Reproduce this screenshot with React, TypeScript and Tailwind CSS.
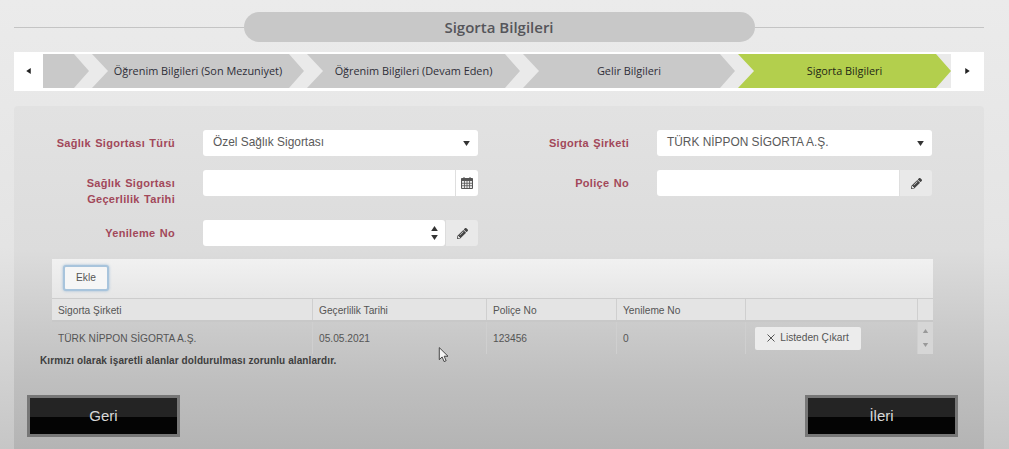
import React from "react";
import { FaPencilAlt } from "react-icons/fa";

const Tri = ({ dir, className }: { dir: "up" | "down" | "left" | "right"; className?: string }) => {
  const points = {
    up: "0,6 4,0 8,6",
    down: "0,0 8,0 4,6",
    left: "6,0 6,8 0,4",
    right: "0,0 0,8 6,4",
  }[dir];
  const box = dir === "up" || dir === "down" ? "0 0 8 6" : "0 0 6 8";
  return (
    <svg viewBox={box} className={className} fill="currentColor">
      <polygon points={points} />
    </svg>
  );
};

const CalendarIcon = () => (
  <svg viewBox="0 0 12 12" className="w-[12px] h-[12px] text-[#555]">
    <path d="M0.5 1.5h11v10h-11z" fill="#e8e8e8" stroke="currentColor" />
    <path d="M0.5 1.5h11v2.5h-11z" fill="currentColor" />
    <path d="M3.5 4v7M6 4v7M8.5 4v7M1 6.3h10M1 8.7h10" stroke="currentColor" strokeWidth="0.8" />
    <path d="M3 0v2M9 0v2" stroke="currentColor" />
  </svg>
);

const Chevron = ({ label, active, width }: { label?: string; active?: boolean; width: string }) => (
  <div
    className={`${width} h-[34px] flex items-center justify-center text-[10.9px] font-normal [font-family:'Open_Sans',sans-serif] [clip-path:polygon(0_0,calc(100%-15px)_0,100%_50%,calc(100%-15px)_100%,0_100%,16px_50%)] ${
      active ? "bg-[#b3cf4d] text-[#1f2815]" : "bg-[#c9c9c9] text-[#2e2e38]"
    }`}
  >
    {label}
  </div>
);

const Label = ({ children, className }: { children: React.ReactNode; className?: string }) => (
  <div
    className={`whitespace-nowrap text-right text-[11px] leading-[16px] font-bold tracking-[0.3px] [word-spacing:1px] text-[#a2485a] ${className ?? ""}`}
  >
    {children}
  </div>
);

const Select = ({ value }: { value: string }) => (
  <div className="w-[275px] h-[26px] bg-white rounded-[3px] flex items-center justify-between pl-[10px] pr-[8px] text-[11.9px] text-[#5a5a5a]">
    <span>{value}</span>
    <Tri dir="down" className="w-[7px] h-[5px] text-[#333]" />
  </div>
);

const PencilBtn = ({ width }: { width: string }) => (
  <div className={`${width} h-full bg-[#e9e9e9] rounded-r-[3px] flex items-center justify-center`}>
    <FaPencilAlt className="w-[11px] h-[11px] text-[#444]" />
  </div>
);

const Cell = ({ width, children, className }: { width: string; children?: React.ReactNode; className?: string }) => (
  <div className={`${width} shrink-0 h-full flex items-center pl-[6px] border-r border-[#cfcfcf] ${className ?? ""}`}>
    {children}
  </div>
);

const BlackBtn = ({ label }: { label: string }) => (
  <div className="w-[153px] h-[42px] border-[3px] border-[#777] flex flex-col relative">
    <div className="h-[19px] bg-[#242424]" />
    <div className="flex-1 bg-[#040404]" />
    <span className="absolute inset-0 flex items-center justify-center text-[15px] text-[#d8d8d8]">{label}</span>
  </div>
);

export default function App() {
  return (
    <div className="w-[1009px] h-[449px] overflow-hidden relative flex flex-col pl-[14px] pr-[25px] pt-[12px] bg-[linear-gradient(#ebebeb_0%,#e4e4e4_55%,#c6c6c6_100%)] [font-family:'Liberation_Sans',sans-serif]">
      {/* title */}
      <div className="h-[30px] shrink-0 flex items-center">
        <div className="flex-1 h-px bg-[#c4c4c4]" />
        <div className="w-[511px] h-[30px] rounded-[15px] bg-[#c8c8c8] flex items-center justify-center text-[15px] font-semibold text-[#55555a] [font-family:'Open_Sans',sans-serif]">
          Sigorta Bilgileri
        </div>
        <div className="flex-1 h-px bg-[#c4c4c4]" />
      </div>

      {/* wizard steps */}
      <div className="mt-[10px] h-[39px] shrink-0 flex bg-[#eaeaea] border-b-[3px] border-t-[2px] border-white">
        <div className="w-[29px] bg-white flex items-center justify-center">
          <Tri dir="left" className="w-[5px] h-[6px] text-[#222]" />
        </div>
        <div className="flex gap-[3px]">
          <div className="w-[46px] h-[34px] bg-[#c9c9c9] [clip-path:polygon(0_0,calc(100%-15px)_0,100%_50%,calc(100%-15px)_100%,0_100%)]" />
          <Chevron label="Öğrenim Bilgileri (Son Mezuniyet)" width="w-[212px]" />
          <Chevron label="Öğrenim Bilgileri (Devam Eden)" width="w-[213px]" />
          <Chevron label="Gelir Bilgileri" width="w-[212px]" />
          <Chevron label="Sigorta Bilgileri" active width="w-[213px]" />
        </div>
        <div className="flex-1 bg-white flex items-center justify-center">
          <Tri dir="right" className="w-[5px] h-[6px] text-[#222]" />
        </div>
      </div>

      {/* main panel */}
      <div className="mt-[15px] flex-1 relative rounded-t-[4px] bg-[linear-gradient(#e2e2e2_0%,#dcdcdc_42%,#c8c8c8_68%,#bfbfbf_80%,#b4b4b4_100%)] pt-[24px] pl-[38px] pr-[51px] flex flex-col">
        <div className="flex">
          {/* left form column */}
          <div className="w-[426px] flex flex-col">
            <div className="h-[26px] flex items-center">
              <Label className="w-[123px]">Sağlık Sigortası Türü</Label>
              <div className="ml-[28px]">
                <Select value="Özel Sağlık Sigortası" />
              </div>
            </div>
            <div className="mt-[14px] h-[26px] flex">
              <Label className="w-[123px] mt-[5px] h-[32px]">
                Sağlık Sigortası
                <br />
                Geçerlilik Tarihi
              </Label>
              <div className="ml-[28px] w-[275px] h-[26px] flex gap-[1px]">
                <div className="flex-1 bg-white rounded-l-[3px]" />
                <div className="w-[22px] bg-white rounded-r-[3px] flex items-center justify-center">
                  <CalendarIcon />
                </div>
              </div>
            </div>
            <div className="mt-[24px] h-[26px] flex items-center">
              <Label className="w-[123px] -mt-[1px]">Yenileme No</Label>
              <div className="ml-[28px] w-[275px] h-[26px] flex gap-[1px]">
                <div className="flex-1 bg-white rounded-l-[3px] rounded-r-[3px] flex items-center justify-end pr-[7px]">
                  <div className="flex flex-col gap-[4px]">
                    <Tri dir="up" className="w-[7px] h-[5px] text-[#333]" />
                    <Tri dir="down" className="w-[7px] h-[5px] text-[#333]" />
                  </div>
                </div>
                <PencilBtn width="w-[32px]" />
              </div>
            </div>
          </div>

          {/* right form column */}
          <div className="ml-[28px] flex flex-col">
            <div className="h-[26px] flex items-center">
              <Label className="w-[123px]">Sigorta Şirketi</Label>
              <div className="ml-[28px]">
                <Select value="TÜRK NİPPON SİGORTA A.Ş." />
              </div>
            </div>
            <div className="mt-[14px] h-[26px] flex items-center">
              <Label className="w-[123px]">Poliçe No</Label>
              <div className="ml-[28px] w-[275px] h-[26px] flex gap-[1px]">
                <div className="flex-1 bg-white rounded-l-[3px]" />
                <PencilBtn width="w-[32px]" />
              </div>
            </div>
          </div>
        </div>

        {/* table */}
        <div className="mt-[13px] w-[881px] text-[10.2px] text-[#555]">
          <div className="h-[40px] flex items-center pl-[11px] pb-[2px] bg-[linear-gradient(#f1f1f1,#e6e6e6)] border-b border-[#cdcdcd]">
            <div className="w-[46px] h-[26px] rounded-[3px] border-2 border-[#a8c4dc] bg-[#f6f6f6] flex items-center justify-center shadow-[0_0_3px_#9dbbd6]">
              Ekle
            </div>
          </div>
          <div className="h-[23px] flex bg-[#e4e4e4] border-b-2 border-[#c8c8c8]">
            <Cell width="w-[261px]" className="pt-[2px]">Sigorta Şirketi</Cell>
            <Cell width="w-[174px]" className="pt-[2px]">Geçerlilik Tarihi</Cell>
            <Cell width="w-[130px]" className="pt-[2px]">Poliçe No</Cell>
            <Cell width="w-[129px]" className="pt-[2px]">Yenileme No</Cell>
            <Cell width="w-[172px]" />
          </div>
          <div className="h-[32px] flex">
            <Cell width="w-[261px]" className="pt-[1px]">TÜRK NİPPON SİGORTA A.Ş.</Cell>
            <Cell width="w-[174px]" className="pt-[1px]">05.05.2021</Cell>
            <Cell width="w-[130px]" className="pt-[1px]">123456</Cell>
            <Cell width="w-[129px]" className="pt-[1px]">0</Cell>
            <Cell width="w-[172px]" className="pl-[9px]">
              <div className="w-[106px] h-[23px] rounded-[2px] bg-[#ececec] flex items-center justify-center gap-[5px]">
                <svg viewBox="0 0 8 8" className="w-[8px] h-[8px] text-[#555]" stroke="currentColor" fill="none">
                  <path d="M0.5 0.5l7 7M7.5 0.5l-7 7" />
                </svg>
                <span>Listeden Çıkart</span>
              </div>
            </Cell>
            <div className="flex-1 bg-[#d6d6d6] flex flex-col items-center justify-between py-[7px]">
              <Tri dir="up" className="w-[7px] h-[4px] text-[#999]" />
              <Tri dir="down" className="w-[7px] h-[4px] text-[#999]" />
            </div>
          </div>
        </div>

        {/* note, sits over the bottom of the table */}
        <div className="-ml-[12px] mt-[1px] h-[12px] leading-[12px] text-[10px] font-bold tracking-[0.1px] text-[#3e3e3e]">
          Kırmızı olarak işaretli alanlar doldurulması zorunlu alanlardır.
        </div>

        <div className="mt-[28px] -ml-[25px] -mr-[25px] flex justify-between">
          <BlackBtn label="Geri" />
          <BlackBtn label="İleri" />
        </div>
      </div>

      {/* mouse cursor */}
      <svg viewBox="0 0 12 18" className="absolute left-[438px] top-[347px] w-[12px] h-[16px]">
        <path d="M0.7 0.7v13.5l3.2-3 2.2 5.2 2.3-1-2.2-5h4.3z" fill="#f4f4f4" stroke="#333" strokeWidth="1" />
      </svg>
    </div>
  );
}
